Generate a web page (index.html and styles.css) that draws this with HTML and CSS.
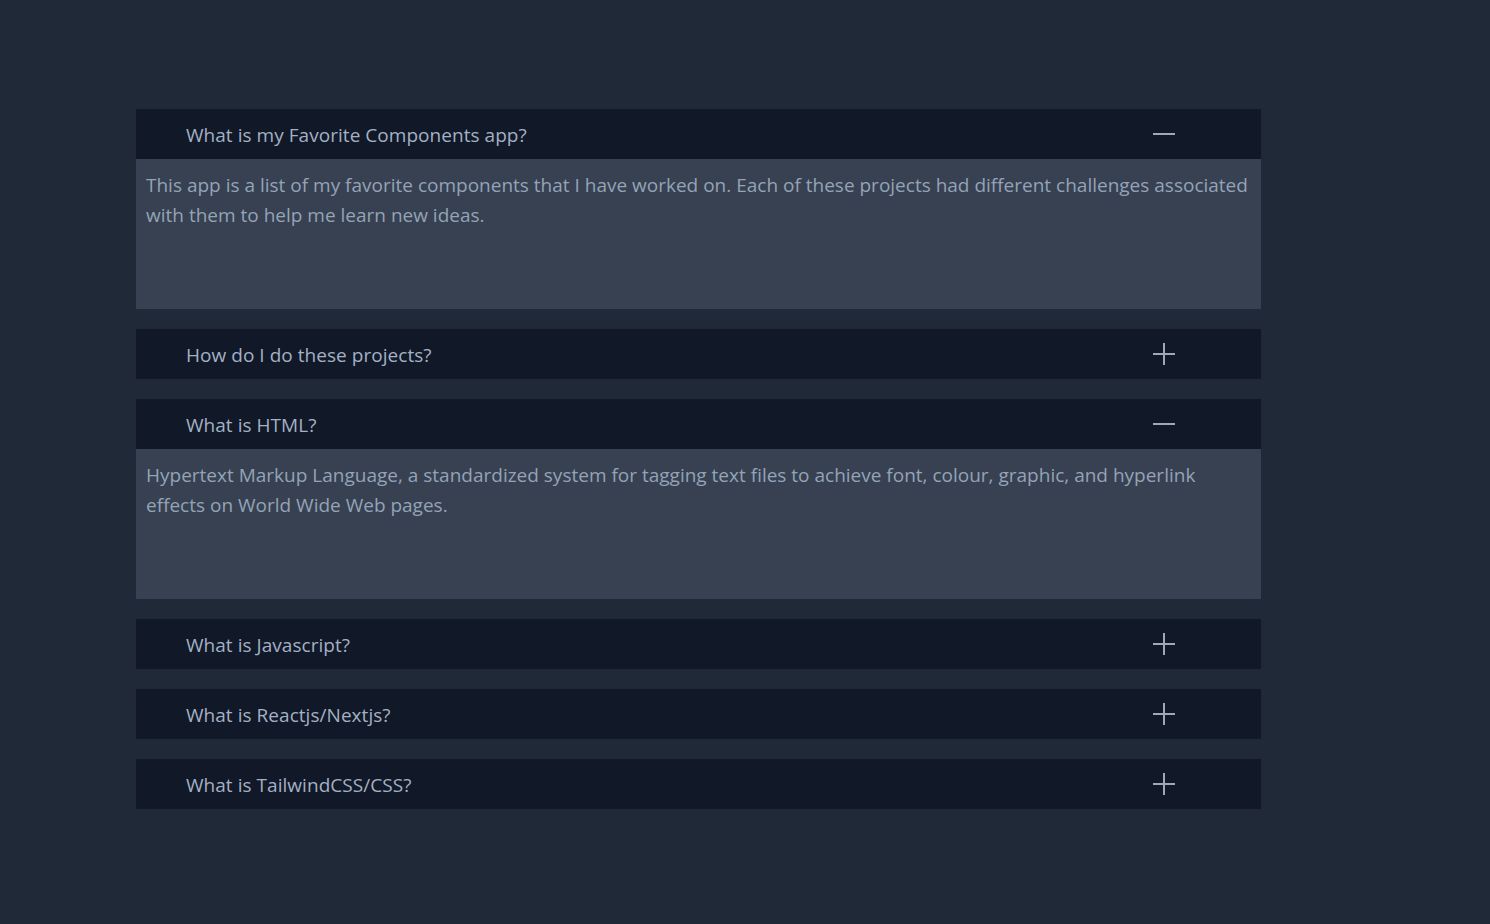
FILE: index.html
```html
<!DOCTYPE html>
<html lang="en">
<head>
<meta charset="utf-8">
<title>FAQ</title>
<link rel="stylesheet" href="styles.css">
</head>
<body>
<main class="faq">
  <section class="item open">
    <div class="head">
      <span class="title">What is my Favorite Components app?</span>
      <svg class="icon" viewBox="0 0 22 22" width="22" height="22"><path d="M0 11H22"/></svg>
    </div>
    <div class="body">This app is a list of my favorite components that I have worked on. Each of these projects had different challenges associated with them to help me learn new ideas.</div>
  </section>
  <section class="item">
    <div class="head">
      <span class="title">How do I do these projects?</span>
      <svg class="icon" viewBox="0 0 22 22" width="22" height="22"><path d="M0 11H22M11 0V22"/></svg>
    </div>
  </section>
  <section class="item open">
    <div class="head">
      <span class="title">What is HTML?</span>
      <svg class="icon" viewBox="0 0 22 22" width="22" height="22"><path d="M0 11H22"/></svg>
    </div>
    <div class="body">Hypertext Markup Language, a standardized system for tagging text files to achieve font, colour, graphic, and hyperlink effects on World Wide Web pages.</div>
  </section>
  <section class="item">
    <div class="head">
      <span class="title">What is Javascript?</span>
      <svg class="icon" viewBox="0 0 22 22" width="22" height="22"><path d="M0 11H22M11 0V22"/></svg>
    </div>
  </section>
  <section class="item">
    <div class="head">
      <span class="title">What is Reactjs/Nextjs?</span>
      <svg class="icon" viewBox="0 0 22 22" width="22" height="22"><path d="M0 11H22M11 0V22"/></svg>
    </div>
  </section>
  <section class="item">
    <div class="head">
      <span class="title">What is TailwindCSS/CSS?</span>
      <svg class="icon" viewBox="0 0 22 22" width="22" height="22"><path d="M0 11H22M11 0V22"/></svg>
    </div>
  </section>
</main>
</body>
</html>
```
FILE: styles.css
```css
html, body {
  margin: 0;
  padding: 0;
  background: #1f2937;
  min-height: 100%;
}
body {
  font-family: "Open Sans", "Noto Sans", sans-serif;
  font-size: 19px;
}
.faq {
  width: 1125px;
  margin-left: 136px;
  padding-top: 109px;
  display: flex;
  flex-direction: column;
  gap: 20px;
}
.item {
  display: flex;
  flex-direction: column;
}
.head {
  height: 50px;
  box-sizing: border-box;
  background: #111827;
  display: flex;
  align-items: center;
  justify-content: space-between;
  padding: 0 86px 0 50px;
  color: #a3b1c4;
  line-height: 26px;
}
.title {
  margin-top: 2px;
  letter-spacing: 0.04px;
}
.icon {
  display: block;
  fill: none;
  stroke: #a0a8b6;
  stroke-width: 2;
}
.body {
  height: 150px;
  box-sizing: border-box;
  background: #374151;
  padding: 11px 8px 0 10px;
  color: #94a3b8;
  line-height: 30px;
}
```
